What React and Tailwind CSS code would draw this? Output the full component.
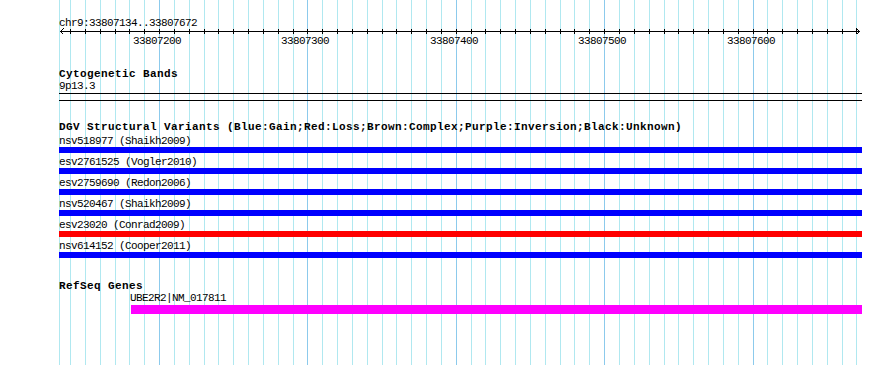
const START = 33807134;
const END = 33807672;

// pixel x for a base position, measured from the page's left edge
const bpX = (bp) => 70.1 + ((bp - 33807140) / 10) * 14.835;

const GRID = [];
for (let bp = 33807140; bp <= 33807670; bp += 10) {
  GRID.push({ bp, x: Math.round(bpX(bp)), major: bp % 100 === 0 });
}

const DGV = [
  { name: "nsv518977 (Shaikh2009)", color: "bg-[#0000ff]" },
  { name: "esv2761525 (Vogler2010)", color: "bg-[#0000ff]" },
  { name: "esv2759690 (Redon2006)", color: "bg-[#0000ff]" },
  { name: "nsv520467 (Shaikh2009)", color: "bg-[#0000ff]" },
  { name: "esv23020 (Conrad2009)", color: "bg-[#ff0000]" },
  { name: "nsv614152 (Cooper2011)", color: "bg-[#0000ff]" },
];

function GuideLines() {
  return (
    <svg className="absolute inset-0" width="890" height="365" shapeRendering="crispEdges">
      <rect x="59" y="0" width="1" height="365" fill="#b0e8f0" />
      {GRID.map((g) => (
        <rect
          key={g.bp}
          x={g.x}
          y="0"
          width="1"
          height="365"
          fill={g.major ? "#8ccaec" : "#b0e8f0"}
        />
      ))}
    </svg>
  );
}

function Ruler() {
  // local coords: x - 59, y - 28
  return (
    <div className="relative h-[18px] w-[803px]">
      <svg className="absolute left-0 top-0" width="803" height="8" shapeRendering="crispEdges">
        <line x1="1" y1="3.5" x2="801" y2="3.5" stroke="#000" strokeWidth="1" />
        <polyline points="4.5,0.5 1.5,3.5 4.5,6.5" fill="none" stroke="#000" strokeWidth="1" />
        <polyline points="797.5,0.5 800.5,3.5 797.5,6.5" fill="none" stroke="#000" strokeWidth="1" />
        {GRID.map((g) => (
          <line
            key={g.bp}
            x1={g.x - 59 + 0.5}
            y1="1"
            x2={g.x - 59 + 0.5}
            y2="6"
            stroke="#000"
            strokeWidth="1"
          />
        ))}
      </svg>
      {GRID.filter((g) => g.major).map((g) => (
        <span key={g.bp} className="absolute top-[8px] w-[48px]" style={{ left: g.x - 59 - 26 }}>
          {g.bp}
        </span>
      ))}
    </div>
  );
}

function TrackTitle({ children, className = "" }) {
  return (
    <div className={`h-[10px] font-bold tracking-[0.4px] whitespace-nowrap ${className}`}>{children}</div>
  );
}

export default function App() {
  return (
    <div className="relative w-[890px] h-[365px] overflow-hidden bg-white text-black font-['Liberation_Mono',monospace] text-[11px] leading-[10px] tracking-[-0.6px]">
      <GuideLines />
      <div className="relative flex flex-col pl-[59px] pt-[18px] w-[862px]">
        <div className="h-[10px]">
          chr9:{START}..{END}
        </div>
        <Ruler />

        <TrackTitle className="mt-[23px]">Cytogenetic Bands</TrackTitle>
        <div className="mt-[2px] h-[10px]">9p13.3</div>
        <div className="mt-[2px] h-[8px] w-[803px] border-y border-black" />

        <TrackTitle className="mt-[21px]">
          DGV Structural Variants (Blue:Gain;Red:Loss;Brown:Complex;Purple:Inversion;Black:Unknown)
        </TrackTitle>
        <div className="mt-[4px] flex flex-col">
          {DGV.map((v) => (
            <div key={v.name} className="flex flex-col h-[21px]">
              <div className="h-[10px] whitespace-nowrap">{v.name}</div>
              <div className={`mt-[1px] h-[6px] w-[803px] ${v.color}`} />
            </div>
          ))}
        </div>

        <TrackTitle className="mt-[19px]">RefSeq Genes</TrackTitle>
        <div className="mt-[2px] ml-[71px] h-[10px]">UBE2R2|NM_017811</div>
        <div className="mt-[2px] ml-[72px] h-[9px] w-[731px] bg-[#ff00ff]" />
      </div>
    </div>
  );
}
